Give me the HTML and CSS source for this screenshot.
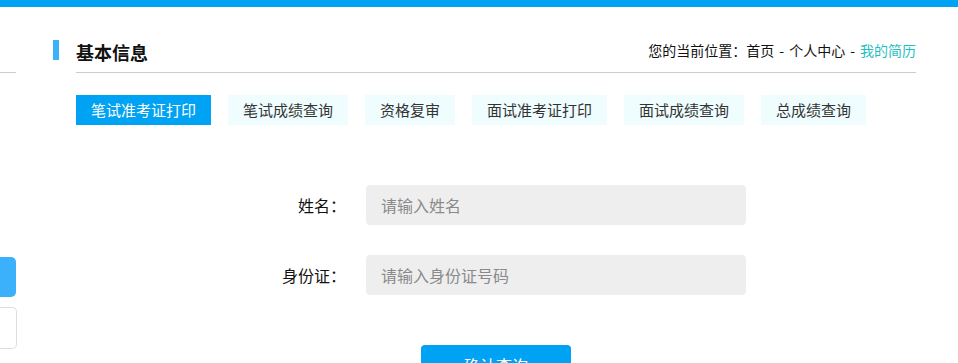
FILE: index.html
```html
<!DOCTYPE html>
<html lang="zh-CN">
  <head>
    <meta charset="UTF-8" />
    <meta name="viewport" content="width=device-width, initial-scale=1.0" />
    <title>基本信息</title>
    <link rel="stylesheet" href="styles.css">
  </head>
  <body>
    <div class="topbar"></div>
    <div class="page">
      <div class="aside">
        <div class="aside-head"></div>
        <div class="aside-menu">
          <div class="aside-item active"></div>
          <div class="aside-item"></div>
        </div>
      </div>

      <div class="main">
        <div class="head">
          <span class="head-mark"></span>
          <div class="head-body">
            <h2 class="head-title">基本信息</h2>
            <div class="crumb">
              您的当前位置：<a href="#">首页</a><span class="sep">-</span><a href="#">个人中心</a><span class="sep">-</span><a href="#" class="current">我的简历</a>
            </div>
          </div>
        </div>

        <div class="tabs">
          <a href="#" class="tab active">笔试准考证打印</a>
          <a href="#" class="tab">笔试成绩查询</a>
          <a href="#" class="tab">资格复审</a>
          <a href="#" class="tab">面试准考证打印</a>
          <a href="#" class="tab">面试成绩查询</a>
          <a href="#" class="tab">总成绩查询</a>
        </div>

        <form class="query-form">
          <div class="form-row">
            <label class="form-label" for="name">姓名：</label>
            <input class="form-input" id="name" type="text" placeholder="请输入姓名" />
          </div>
          <div class="form-row">
            <label class="form-label" for="idcard">身份证：</label>
            <input class="form-input" id="idcard" type="text" placeholder="请输入身份证号码" />
          </div>
          <button type="button" class="submit-btn">确认查询</button>
        </form>
      </div>
    </div>
  </body>
</html>
```

FILE: styles.css
```css
:root {
  --primary: #00a3f3;
  --light: #3bb0fb;
  --text: #333;
  --border: #cccccc;
  --tab-bg: #effdff;
  --link: #1fbfbf;
}

body,
html {
  margin: 0;
  padding: 0;
  font-family: "Noto Sans CJK SC", "Noto Sans", sans-serif;
  color: var(--text);
  background: #fff;
  overflow: hidden;
}

a {
  color: inherit;
  text-decoration: none;
}

.topbar {
  height: 7px;
  background-color: var(--primary);
}

.page {
  display: flex;
}

/* left menu, mostly cut off */
.aside {
  width: 17px;
  flex-shrink: 0;
}

.aside-head {
  height: 65px;
  border-bottom: 1px solid var(--border);
  width: 16px;
}

.aside-menu {
  margin-top: 184px;
}

.aside-item {
  box-sizing: border-box;
  border: 1px solid #dddddd;
  border-left: none;
  border-radius: 0 5px 5px 0;
  width: 17px;
  height: 42px;
  margin-top: 10px;
}

.aside-item.active {
  width: 16px;
  height: 40px;
  margin-top: 0;
  border: none;
  background-color: var(--light);
}

.main {
  margin-left: 59px;
  width: 840px;
}

.head {
  display: flex;
  margin-top: 24px;
}

.head-mark {
  width: 6px;
  height: 20px;
  margin-left: -23px;
  margin-right: 17px;
  margin-top: 9px;
  background-color: var(--light);
  flex-shrink: 0;
}

.head-body {
  flex: 1;
  height: 41px;
  display: flex;
  align-items: center;
  justify-content: space-between;
  border-bottom: 1px solid var(--border);
}

.head-title {
  margin: 0;
  font-size: 18px;
  font-weight: bold;
  line-height: 40px;
  color: #111;
}

.crumb {
  font-size: 14px;
  line-height: 20px;
  margin-top: -4px;
  color: #111;
}

.crumb .sep {
  margin: 0 5px;
}

.crumb .current {
  color: var(--link);
}

.tabs {
  display: flex;
  gap: 17px;
  margin-top: 22px;
}

.tab {
  height: 30px;
  line-height: 30px;
  padding: 0 15px;
  font-size: 15px;
  background-color: var(--tab-bg);
  color: var(--text);
}

.tab.active {
  background-color: var(--primary);
  color: #fff;
}

.query-form {
  margin-top: 60px;
}

.form-row {
  display: flex;
  align-items: center;
  margin-bottom: 30px;
}

.form-label {
  width: 270px;
  margin-right: 20px;
  text-align: right;
  font-size: 16px;
  color: #111;
}

.form-input {
  width: 380px;
  height: 40px;
  box-sizing: border-box;
  padding: 0 15px;
  border: none;
  border-radius: 4px;
  background-color: #eeeeee;
  font-family: inherit;
  font-size: 16px;
  outline: none;
}

.form-input::placeholder {
  color: #8a8a8a;
}

.submit-btn {
  display: block;
  width: 150px;
  height: 40px;
  margin: 50px auto 0;
  border: none;
  border-radius: 4px;
  background-color: var(--primary);
  color: #fff;
  font-family: inherit;
  font-size: 16px;
}
```
